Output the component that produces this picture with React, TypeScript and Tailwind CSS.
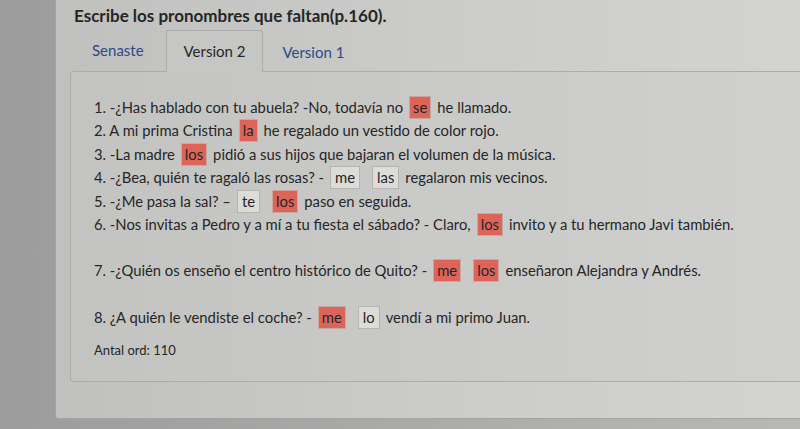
import React from "react";

type Part = string | { w: string; ok: boolean };

const lines: { parts: Part[]; gap?: boolean }[] = [
  { parts: ["1. -¿Has hablado con tu abuela? -No, todavía no", { w: "se", ok: false }, "he llamado."] },
  { parts: ["2. A mi prima Cristina", { w: "la", ok: false }, "he regalado un vestido de color rojo."] },
  { parts: ["3. -La madre", { w: "los", ok: false }, "pidió a sus hijos que bajaran el volumen de la música."] },
  { parts: ["4. -¿Bea, quién te ragaló las rosas? -", { w: "me", ok: true }, { w: "las", ok: true }, "regalaron mis vecinos."] },
  { parts: ["5. -¿Me pasa la sal? –", { w: "te", ok: true }, { w: "los", ok: false }, "paso en seguida."] },
  { parts: ["6. -Nos invitas a Pedro y a mí a tu fiesta el sábado? - Claro,", { w: "los", ok: false }, "invito y a tu hermano Javi también."] },
  { parts: ["7. -¿Quién os enseño el centro histórico de Quito? -", { w: "me", ok: false }, { w: "los", ok: false }, "enseñaron Alejandra y Andrés."], gap: true },
  { parts: ["8. ¿A quién le vendiste el coche? -", { w: "me", ok: false }, { w: "lo", ok: true }, "vendí a mi primo Juan."], gap: true },
];

function Blank({ w, ok }: { w: string; ok: boolean }) {
  return (
    <span
      className={
        ok
          ? "mx-[6px] inline-block border border-[#b4b4b0] bg-[#dcdcd8] px-[4px] leading-[21px]"
          : "mx-[6px] inline-block border border-[#c9a8a2] bg-[#dd6459] px-[3px] leading-[21px]"
      }
    >
      {w}
    </span>
  );
}

export default function App() {
  return (
    <div className="h-[429px] w-[800px] overflow-hidden bg-linear-to-r from-[#9c9c9c] to-[#b8b8b6] font-['Lato',sans-serif] text-[#262626]">
      <div className="ml-[55px] h-[419px] rounded-bl-[3px] border-b border-l border-[#a4a4a2] bg-linear-to-r from-[#c0c0be] via-[#cbcbc9] to-[#d3d3d1] pl-[18px] pt-[4px]">
        <h1 className="text-[17px] font-bold leading-[24px]">Escribe los pronombres que faltan(p.160).</h1>

        {/* tabs */}
        <div className="mt-[1px] flex h-[42px] items-end text-[15px]">
          <div className="pb-[10px] pl-[18px] pr-[22px] text-[#2d4a86]">Senaste</div>
          <div className="-mb-px h-[42px] rounded-t-[3px] border border-b-0 border-[#acacaa] bg-[#c6c6c4] px-[17px] pt-[9px]">
            Version 2
          </div>
          <div className="pb-[8px] pl-[19px] text-[#2d4a86]">Version 1</div>
        </div>

        {/* tab panel */}
        <div className="-ml-[4px] h-[311px] rounded-l-[3px] border border-r-0 border-[#acacaa] bg-linear-to-r from-[#c3c3c1] to-[#d0d0ce] pl-[23px] pt-[24px] text-[14.8px]">
          {lines.map((l, i) => (
            <div key={i} className={l.gap ? "mt-[23px] leading-[23.4px]" : "leading-[23.4px]"}>
              {l.parts.map((p, j) =>
                typeof p === "string" ? (
                  <span key={j}>{p}</span>
                ) : (
                  <Blank key={j} w={p.w} ok={p.ok} />
                )
              )}
            </div>
          ))}
          <div className="mt-[12px] text-[13px]">Antal ord: 110</div>
        </div>
      </div>
    </div>
  );
}
